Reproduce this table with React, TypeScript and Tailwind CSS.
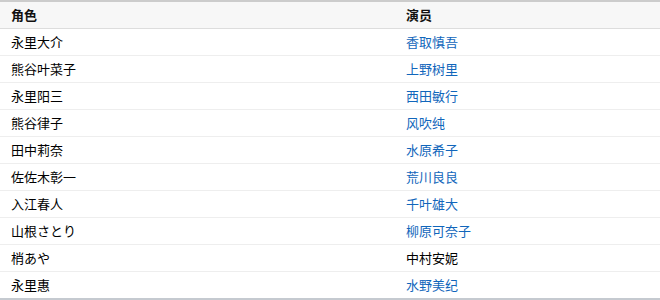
const rows: { role: string; actor: string; link: boolean }[] = [
  { role: "永里大介", actor: "香取慎吾", link: true },
  { role: "熊谷叶菜子", actor: "上野树里", link: true },
  { role: "永里阳三", actor: "西田敏行", link: true },
  { role: "熊谷律子", actor: "风吹纯", link: true },
  { role: "田中莉奈", actor: "水原希子", link: true },
  { role: "佐佐木彰一", actor: "荒川良良", link: true },
  { role: "入江春人", actor: "千叶雄大", link: true },
  { role: "山根さとり", actor: "柳原可奈子", link: true },
  { role: "梢あや", actor: "中村安妮", link: false },
  { role: "永里惠", actor: "水野美纪", link: true },
]

export default function App() {
  return (
    <div
      className="w-[660px] h-[300px] bg-white text-[13px] text-black"
      style={{ fontFamily: '"Noto Sans CJK SC", "Noto Sans", sans-serif' }}
    >
      <div className="border-t-2 border-b-2 border-t-[#cccccc] border-b-[#c5cad0]">
        <div className="grid grid-cols-[396px_1fr] h-[27px] bg-[#f7f7f7] border-b border-[#dddddd] font-bold text-[#111]">
          <div className="flex items-center pl-[11px]">角色</div>
          <div className="flex items-center pl-[10px]">演员</div>
        </div>
        {rows.map((r, i) => (
          <div
            key={r.role}
            className={
              "grid grid-cols-[396px_1fr] h-[26px] " +
              (i < rows.length - 1 ? "h-[27px] border-b border-[#eeeeee]" : "")
            }
          >
            <div className="flex items-center pl-[11px]">{r.role}</div>
            <div className="flex items-center pl-[10px]">
              {r.link ? (
                <a href="#" className="text-[#1166bb]">
                  {r.actor}
                </a>
              ) : (
                <span>{r.actor}</span>
              )}
            </div>
          </div>
        ))}
      </div>
    </div>
  )
}
